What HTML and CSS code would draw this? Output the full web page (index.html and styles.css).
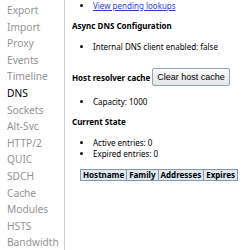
FILE: index.html
```html
<!DOCTYPE html>
<html lang="en">
<head>
  <meta charset="utf-8" />
  <title>net-internals</title>
  <link rel="stylesheet" href="styles.css">
</head>
<body>
  <!-- Tabs -->
  <nav class="tabs">
    <a href="">Export</a>
    <a href="">Import</a>
    <a href="">Proxy</a>
    <a href="">Events</a>
    <a href="">Timeline</a>
    <a href="" class="selected">DNS</a>
    <a href="">Sockets</a>
    <a href="">Alt-Svc</a>
    <a href="">HTTP/2</a>
    <a href="">QUIC</a>
    <a href="">SDCH</a>
    <a href="">Cache</a>
    <a href="">Modules</a>
    <a href="">HSTS</a>
    <a href="">Bandwidth</a>
  </nav>

  <main class="view">
    <ul class="list first">
      <li><a href="" class="link">View pending lookups</a></li>
    </ul>

    <h4 class="heading">Async DNS Configuration</h4>
    <ul class="list">
      <li>Internal DNS client enabled: false</li>
    </ul>

    <div class="resolver">
      <h4 class="heading inline">Host resolver cache</h4>
      <button class="btn">Clear host cache</button>
    </div>
    <ul class="list">
      <li>Capacity: 1000</li>
    </ul>

    <h4 class="heading">Current State</h4>
    <ul class="list">
      <li>Active entries: 0</li>
      <li>Expired entries: 0</li>
    </ul>

    <table class="cache">
      <thead><tr><th>Hostname</th><th>Family</th><th>Addresses</th><th>Expires</th></tr></thead>
      <tbody></tbody>
    </table>
  </main>
</body>
</html>
```

FILE: styles.css
```css
:root{
  --tab-gray:#939393;
  --line:#cfcfcf;
  --link:#2a3fd0;
  --th-bg:#dfe7f1;
  --th-border:#8797ad;
}

*{box-sizing:border-box;margin:0;padding:0}
body{
  display:flex;
  min-height:100vh;
  font-family:"Noto Sans","Open Sans",Arial,sans-serif;
  color:#000;background:#fff;
  overflow:hidden;
}

/* —— Tabs —— */
.tabs{
  width:65px;flex:none;
  border-right:1px solid var(--line);
  display:flex;flex-direction:column;
  padding:2px 0 0 7px;
}
.tabs a{
  color:var(--tab-gray);text-decoration:none;
  font-size:10.2px;line-height:16.6px;white-space:nowrap;
}
.tabs a.selected{color:#000}

/* —— DNS view —— */
.view{
  flex:1;padding:0 0 0 7px;
  font-size:8px;line-height:11px;
}
.list{list-style:disc;padding-left:21px;margin:10px 0 0}
.list.first{margin-top:0}
.link{color:var(--link)}
.heading{font-weight:700;font-size:8px;margin-top:9px}
.heading.inline{margin:0}

.resolver{display:flex;align-items:center;gap:2px;margin-top:16px}
.btn{
  font-family:"Liberation Sans",Arial,sans-serif;font-size:9px;
  height:18px;padding:0 4px;
  border:1px solid #8aa7c8;border-radius:2px;
  background:linear-gradient(#fbfbfb,#e4e4e4);color:#000;
}

.cache{border-collapse:collapse;margin:10px 0 0 8px}
.cache th{
  background:var(--th-bg);border:1px solid var(--th-border);
  font-size:8px;font-weight:700;line-height:10px;padding:0 2px;text-align:left;
}
```
